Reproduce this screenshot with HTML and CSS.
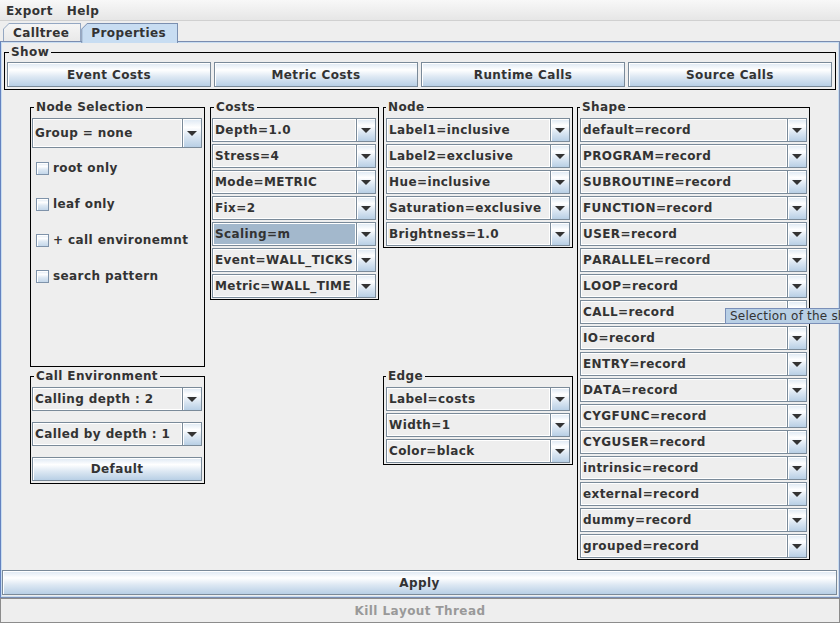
FILE: index.html
```html
<!DOCTYPE html>
<html>
<head>
<meta charset="utf-8">
<link rel="stylesheet" href="styles.css">
</head>
<body>
<div class="window">
  <div class="menubar">
    <span class="menu">Export</span>
    <span class="menu">Help</span>
  </div>
  <div class="tabrow">
    <div class="tab"><span class="tab-in">Calltree</span></div>
    <div class="tab active"><span class="tab-in">Properties</span></div>
  </div>
  <div class="tabpanel">
    <div class="grp show">
      <span class="title">Show</span>
      <div class="showrow">
        <div class="jbtn">Event Costs</div>
        <div class="jbtn">Metric Costs</div>
        <div class="jbtn">Runtime Calls</div>
        <div class="jbtn">Source Calls</div>
      </div>
    </div>

    <div class="panels">
      <div class="grp narrow nodesel">
        <span class="title">Node Selection</span>
        <div class="combo tall"><span class="val">Group = none</span><span class="btn"><i class="arrow"></i></span></div>
        <div class="checks">
          <div class="chk"><span class="box"></span><span>root only</span></div>
          <div class="chk"><span class="box"></span><span>leaf only</span></div>
          <div class="chk"><span class="box"></span><span>+ call environemnt</span></div>
          <div class="chk"><span class="box"></span><span>search pattern</span></div>
        </div>
      </div>

      <div class="grp narrow costs">
        <span class="title">Costs</span>
        <div class="stack">
          <div class="combo"><span class="val">Depth=1.0</span><span class="btn"><i class="arrow"></i></span></div>
          <div class="combo"><span class="val">Stress=4</span><span class="btn"><i class="arrow"></i></span></div>
          <div class="combo"><span class="val">Mode=METRIC</span><span class="btn"><i class="arrow"></i></span></div>
          <div class="combo"><span class="val">Fix=2</span><span class="btn"><i class="arrow"></i></span></div>
          <div class="combo sel"><span class="val">Scaling=m</span><span class="btn"><i class="arrow"></i></span></div>
          <div class="combo"><span class="val">Event=WALL_TICKS</span><span class="btn"><i class="arrow"></i></span></div>
          <div class="combo"><span class="val">Metric=WALL_TIME</span><span class="btn"><i class="arrow"></i></span></div>
        </div>
      </div>

      <div class="grp wide node">
        <span class="title">Node</span>
        <div class="stack">
          <div class="combo"><span class="val">Label1=inclusive</span><span class="btn"><i class="arrow"></i></span></div>
          <div class="combo"><span class="val">Label2=exclusive</span><span class="btn"><i class="arrow"></i></span></div>
          <div class="combo"><span class="val">Hue=inclusive</span><span class="btn"><i class="arrow"></i></span></div>
          <div class="combo"><span class="val">Saturation=exclusive</span><span class="btn"><i class="arrow"></i></span></div>
          <div class="combo"><span class="val">Brightness=1.0</span><span class="btn"><i class="arrow"></i></span></div>
        </div>
      </div>

      <div class="grp wide shape">
        <span class="title">Shape</span>
        <div class="stack">
          <div class="combo"><span class="val">default=record</span><span class="btn"><i class="arrow"></i></span></div>
          <div class="combo"><span class="val">PROGRAM=record</span><span class="btn"><i class="arrow"></i></span></div>
          <div class="combo"><span class="val">SUBROUTINE=record</span><span class="btn"><i class="arrow"></i></span></div>
          <div class="combo"><span class="val">FUNCTION=record</span><span class="btn"><i class="arrow"></i></span></div>
          <div class="combo"><span class="val">USER=record</span><span class="btn"><i class="arrow"></i></span></div>
          <div class="combo"><span class="val">PARALLEL=record</span><span class="btn"><i class="arrow"></i></span></div>
          <div class="combo"><span class="val">LOOP=record</span><span class="btn"><i class="arrow"></i></span></div>
          <div class="combo"><span class="val">CALL=record</span><span class="btn"><i class="arrow"></i></span></div>
          <div class="combo"><span class="val">IO=record</span><span class="btn"><i class="arrow"></i></span></div>
          <div class="combo"><span class="val">ENTRY=record</span><span class="btn"><i class="arrow"></i></span></div>
          <div class="combo"><span class="val">DATA=record</span><span class="btn"><i class="arrow"></i></span></div>
          <div class="combo"><span class="val">CYGFUNC=record</span><span class="btn"><i class="arrow"></i></span></div>
          <div class="combo"><span class="val">CYGUSER=record</span><span class="btn"><i class="arrow"></i></span></div>
          <div class="combo"><span class="val">intrinsic=record</span><span class="btn"><i class="arrow"></i></span></div>
          <div class="combo"><span class="val">external=record</span><span class="btn"><i class="arrow"></i></span></div>
          <div class="combo"><span class="val">dummy=record</span><span class="btn"><i class="arrow"></i></span></div>
          <div class="combo"><span class="val">grouped=record</span><span class="btn"><i class="arrow"></i></span></div>
        </div>
      </div>

      <div class="grp narrow callenv">
        <span class="title">Call Environment</span>
        <div class="stack loose">
          <div class="combo"><span class="val">Calling depth : 2</span><span class="btn"><i class="arrow"></i></span></div>
          <div class="combo"><span class="val">Called by depth : 1</span><span class="btn"><i class="arrow"></i></span></div>
          <div class="jbtn">Default</div>
        </div>
      </div>

      <div class="grp wide edge">
        <span class="title">Edge</span>
        <div class="stack">
          <div class="combo"><span class="val">Label=costs</span><span class="btn"><i class="arrow"></i></span></div>
          <div class="combo"><span class="val">Width=1</span><span class="btn"><i class="arrow"></i></span></div>
          <div class="combo"><span class="val">Color=black</span><span class="btn"><i class="arrow"></i></span></div>
        </div>
      </div>
    </div>

    <div class="jbtn apply">Apply</div>
  </div>
  <div class="kill">Kill Layout Thread</div>
  <div class="tooltip">Selection of the shape</div>
</div>
</body>
</html>
```

FILE: styles.css
```css
* { box-sizing: border-box; }

html, body {
  margin: 0;
  padding: 0;
}

body {
  width: 840px;
  height: 623px;
  overflow: hidden;
  background: #eeeeee;
  font-family: "DejaVu Sans", "Noto Sans", sans-serif;
  font-weight: bold;
  font-size: 12px;
  letter-spacing: 0.4px;
  font-kerning: none;
  color: #333333;
}

.window {
  position: relative;
  width: 840px;
  height: 623px;
  display: flex;
  flex-direction: column;
}

/* menu bar */
.menubar {
  flex: 0 0 21px;
  display: flex;
  align-items: center;
  background: linear-gradient(#f8f8f8, #e6e6e6);
  border-bottom: 1px solid #d0d0d0;
}

.menu {
  padding: 0 8px 0 6px;
  line-height: 14px;
  margin-top: 1px;
}

/* tabs */
.tabrow {
  flex: 0 0 20px;
  display: flex;
  align-items: flex-end;
  padding-left: 3px;
}

.tab {
  height: 18px;
  padding: 1px 1px 0 1px;
  background: #94a7c2;
  clip-path: polygon(0 6px, 6px 0, 100% 0, 100% 100%, 0 100%);
}

.tab-in {
  display: flex;
  align-items: center;
  height: 100%;
  padding: 0 11px 0 9px;
  background: linear-gradient(#f5f5f5, #e9e9e9);
  clip-path: polygon(0 5px, 5px 0, 100% 0, 100% 100%, 0 100%);
}

.tab.active {
  position: relative;
  z-index: 1;
  height: 20px;
  margin-bottom: -2px;
  background: #7a8fb0;
}

.tab.active .tab-in {
  background: #c8ddf2;
  padding-bottom: 2px;
}

/* tab panel */
.tabpanel {
  flex: 0 0 557px;
  border: 1px solid #7b8db0;
  border-left-color: #6382bf;
  box-shadow: inset 0 0 0 1px #c8ddf2;
  padding: 1px 2px 2px 1px;
  display: flex;
  flex-direction: column;
}

/* titled groups: black line border with the title laid over the top line */
.grp {
  position: relative;
  border: 1px solid #000000;
  padding: 10px 2px 1px 1px;
}

.grp .title {
  position: absolute;
  left: 3px;
  top: -8px;
  padding: 0 2px;
  line-height: 15px;
  background: #eeeeee;
  white-space: nowrap;
}

.grp.wide {
  padding: 10px 2px 1px 2px;
}

.grp.wide .title {
  left: 2px;
}

.show {
  margin: 9px 1px 0 2px;
  padding: 9px 3px 2px 2px;
}

.show .title {
  left: 4px;
}

.showrow {
  display: flex;
  gap: 3px;
}

.showrow .jbtn {
  flex: 1;
  height: 25px;
}

/* buttons */
.jbtn {
  display: flex;
  align-items: center;
  justify-content: center;
  height: 24px;
  border: 1px solid #7a8a99;
  box-shadow: inset 1px 1px 0 #ffffff;
  background: linear-gradient(#dde8f3 0%, #ffffff 30%, #dde8f3 60%, #b8cfe5 100%);
  white-space: nowrap;
}

.apply {
  margin-top: auto;
  height: 25px;
}

/* layout grid for the property groups */
.panels {
  display: grid;
  grid-template-columns: 176px 169px 190px 233px;
  grid-template-rows: 260px auto;
  column-gap: 4px;
  row-gap: 9px;
  margin: 17px 0 0 28px;
  align-items: start;
}

.narrow { width: 169px; }
.nodesel, .callenv { width: 175px; }

.nodesel {
  grid-column: 1;
  grid-row: 1;
  align-self: stretch;
}

.costs { grid-column: 2; grid-row: 1; }
.node { grid-column: 3; grid-row: 1; }
.shape { grid-column: 4; grid-row: 1 / span 2; }
.callenv { grid-column: 1; grid-row: 2; padding-bottom: 2px; }
.edge { grid-column: 3; grid-row: 2; padding-bottom: 2px; }

.stack {
  display: flex;
  flex-direction: column;
  gap: 2px;
}

.stack.loose {
  gap: 11px;
}

/* combo boxes */
.combo {
  display: flex;
  height: 24px;
  border: 1px solid #7a8a99;
  background: #eeeeee;
}

.combo.tall {
  height: 30px;
}

.val {
  flex: 1;
  min-width: 0;
  display: flex;
  align-items: center;
  padding-left: 2px;
  white-space: nowrap;
  overflow: hidden;
  box-shadow: inset 1px 1px 0 #ffffff, inset -1px -1px 0 #ffffff;
}

.combo.sel .val {
  background: #a3b8cc;
}

.btn {
  flex: 0 0 19px;
  display: flex;
  align-items: center;
  justify-content: center;
  border-left: 1px solid #7a8a99;
  box-shadow: inset 1px 1px 0 #ffffff;
  background: linear-gradient(#dde8f3 0%, #ffffff 30%, #dde8f3 60%, #b8cfe5 100%);
}

.arrow {
  display: block;
  width: 0;
  height: 0;
  border-left: 5px solid transparent;
  border-right: 5px solid transparent;
  border-top: 5px solid #333333;
  margin-top: 1px;
}

/* check boxes */
.checks {
  margin-top: 2px;
}

.chk {
  height: 36px;
  display: flex;
  align-items: center;
  gap: 4px;
  padding-left: 4px;
}

.box {
  flex: 0 0 13px;
  width: 13px;
  height: 13px;
  border: 1px solid #7f93aa;
  box-shadow: inset 1px 1px 0 #ffffff;
  background: linear-gradient(#dde8f3 0%, #ffffff 30%, #dde8f3 60%, #c4d7ea 100%);
}

/* bottom disabled button */
.kill {
  flex: 0 0 25px;
  border: 1px solid #8c8c8c;
  display: flex;
  align-items: center;
  justify-content: center;
  color: #999999;
}

/* tooltip */
.tooltip {
  position: absolute;
  left: 725px;
  top: 308px;
  height: 16px;
  padding: 0 4px;
  border: 1px solid #7a8fb8;
  background: #b8cfe5;
  font-weight: normal;
  letter-spacing: 0.2px;
  color: #333333;
  line-height: 14px;
  white-space: nowrap;
}
```
